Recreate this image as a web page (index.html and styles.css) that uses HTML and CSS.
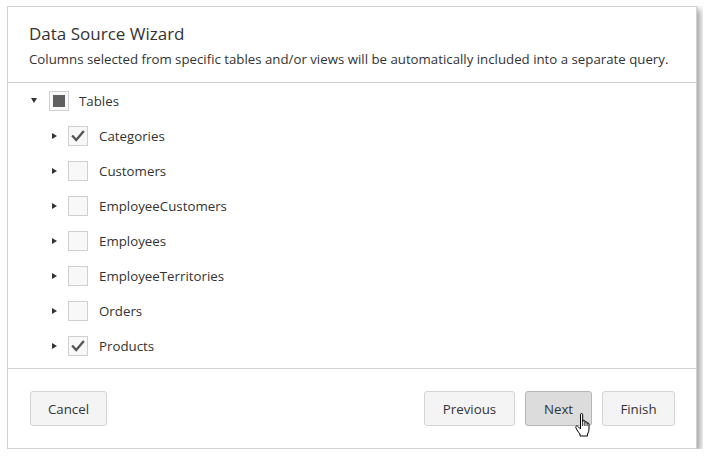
FILE: index.html
```html
<!DOCTYPE html>
<html>
<head>
  <title>Data Source Wizard</title>
  <link rel="stylesheet" href="styles.css">
</head>
<body>
  <div class="wizard">
    <div class="wizard-header">
      <div class="wizard-title">Data Source Wizard</div>
      <div class="wizard-desc">Columns selected from specific tables and/or views will be automatically included into a separate query.</div>
    </div>

    <!-- table tree -->
    <div class="tree">
      <div class="tree-row root">
        <span class="toggle down"></span>
        <span class="check partial"><span class="fill"></span></span>
        <span class="label">Tables</span>
      </div>
      <div class="tree-row child">
        <span class="toggle right"></span>
        <span class="check"><svg viewBox="0 0 20 20"><polyline points="3.5,9.5 8,14.5 16.5,4.5"/></svg></span>
        <span class="label">Categories</span>
      </div>
      <div class="tree-row child">
        <span class="toggle right"></span>
        <span class="check"></span>
        <span class="label">Customers</span>
      </div>
      <div class="tree-row child">
        <span class="toggle right"></span>
        <span class="check"></span>
        <span class="label">EmployeeCustomers</span>
      </div>
      <div class="tree-row child">
        <span class="toggle right"></span>
        <span class="check"></span>
        <span class="label">Employees</span>
      </div>
      <div class="tree-row child">
        <span class="toggle right"></span>
        <span class="check"></span>
        <span class="label">EmployeeTerritories</span>
      </div>
      <div class="tree-row child">
        <span class="toggle right"></span>
        <span class="check"></span>
        <span class="label">Orders</span>
      </div>
      <div class="tree-row child">
        <span class="toggle right"></span>
        <span class="check"><svg viewBox="0 0 20 20"><polyline points="3.5,9.5 8,14.5 16.5,4.5"/></svg></span>
        <span class="label">Products</span>
      </div>
    </div>

    <div class="wizard-footer">
      <button class="btn btn-cancel">Cancel</button>
      <div class="btn-group">
        <button class="btn btn-prev">Previous</button>
        <button class="btn btn-next hover">Next
          <svg class="cursor" viewBox="0 0 15 24" width="15" height="24">
            <path d="M5.5 13 L5.5 1.8 Q5.5 0.5 6.6 0.5 Q7.7 0.5 7.7 1.8 L7.7 9 L7.7 8.2 Q7.7 7.2 8.8 7.2 Q9.9 7.2 9.9 8.2 L9.9 9.6 Q9.9 8.6 11 8.6 Q12.1 8.6 12.1 9.8 L12.1 10.6 Q12.1 9.9 13 9.9 Q14 9.9 14 11 L14 16 Q14 19 12.5 21 L12.5 23 L5 23 L5 21 Q3.5 19.5 2 17 L0.8 14.6 Q0.4 13.4 1.5 13 Q2.6 12.7 3.4 13.8 L5.5 16 Z" fill="#fff" stroke="#000" stroke-width="1" stroke-linejoin="round"/>
            <path d="M7.7 9 L7.7 13 M9.9 9.6 L9.9 13 M12.1 10.6 L12.1 13" stroke="#000" stroke-width="0.9" fill="none"/>
          </svg>
        </button>
        <button class="btn btn-finish">Finish</button>
      </div>
    </div>
  </div>
</body>
</html>
```

FILE: styles.css
```css
body {
  margin: 6px 7px;
  background: #ffffff;
  font-family: 'Segoe UI', 'Open Sans', sans-serif;
  color: #333333;
}

.wizard {
  width: 688px;
  height: 441px;
  background: #ffffff;
  border: 1px solid #d2d2d2;
  box-shadow: 3px 3px 7px rgba(0, 0, 0, 0.4);
  display: flex;
  flex-direction: column;
}

.wizard-header {
  height: 76px;
  flex-shrink: 0;
  box-sizing: border-box;
  padding: 15px 21px 0;
  border-bottom: 1px solid #d2d2d2;
}

.wizard-title {
  font-size: 17px;
  line-height: 24px;
  color: #333333;
}

.wizard-desc {
  margin-top: 4px;
  font-size: 13.25px;
  line-height: 18px;
  color: #333333;
  white-space: nowrap;
}

.tree {
  height: 286px;
  flex-shrink: 0;
  box-sizing: border-box;
  border-bottom: 1px solid #d2d2d2;
}

.tree-row {
  height: 35px;
  display: flex;
  align-items: center;
}

.tree-row.root {
  padding-left: 23px;
}

.tree-row.child {
  padding-left: 43px;
}

.toggle {
  width: 0;
  height: 0;
}

.toggle.down {
  border-left: 3px solid transparent;
  border-right: 3px solid transparent;
  border-top: 5px solid #333333;
  margin-right: 12px;
}

.toggle.right {
  border-top: 3px solid transparent;
  border-bottom: 3px solid transparent;
  border-left: 5px solid #333333;
  margin-left: 1px;
  margin-right: 11px;
}

.check {
  width: 18px;
  height: 18px;
  border: 1px solid #d0d0d0;
  background: #f8f8f8;
  display: flex;
  align-items: center;
  justify-content: center;
  margin-right: 11px;
}

.root .check {
  margin-right: 10px;
}

.check svg {
  width: 20px;
  height: 20px;
}

.check polyline {
  fill: none;
  stroke: #555555;
  stroke-width: 2.6;
}

.check .fill {
  width: 12px;
  height: 12px;
  background: #5f5f5f;
}

.label {
  font-size: 13.3px;
  color: #333333;
}

.wizard-footer {
  flex: 1;
  display: flex;
  justify-content: space-between;
  align-items: flex-start;
  padding: 22px 21px 0 22px;
}

.btn-group {
  display: flex;
  gap: 10px;
}

.btn {
  height: 35px;
  padding: 0;
  font-family: 'Segoe UI', 'Open Sans', sans-serif;
  font-size: 13.3px;
  color: #333333;
  background: #f4f4f4;
  border: 1px solid #d4d4d4;
  border-radius: 3px;
  position: relative;
}

.btn-cancel {
  width: 77px;
}

.btn-prev {
  width: 91px;
}

.btn-next {
  width: 67px;
}

.btn-finish {
  width: 73px;
}

.btn.hover {
  background: #dcdcdc;
  border-color: #b5b5b5;
}

.cursor {
  position: absolute;
  left: 49px;
  top: 21px;
}
```
